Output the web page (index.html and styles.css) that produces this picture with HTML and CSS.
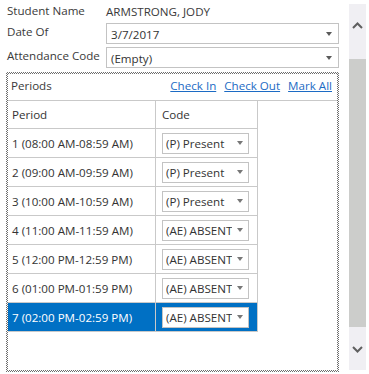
FILE: index.html
```html
<!DOCTYPE html>
<html>
<head>
<meta charset="utf-8">
<link rel="stylesheet" href="styles.css">
</head>
<body>
<div class="page">
  <div class="main">
    <div class="field field-static">
      <div class="label">Student Name</div>
      <div class="value">ARMSTRONG, JODY</div>
    </div>
    <div class="field">
      <div class="label">Date Of</div>
      <div class="select"><span>3/7/2017</span><i class="caret"></i></div>
    </div>
    <div class="field">
      <div class="label">Attendance Code</div>
      <div class="select"><span>(Empty)</span><i class="caret"></i></div>
    </div>
    <div class="focusbox">
      <div class="panel">
        <div class="panel-head">
          <span class="title">Periods</span>
          <nav class="links">
            <a>Check In</a>
            <a>Check Out</a>
            <a>Mark All</a>
          </nav>
        </div>
        <div class="grid">
          <div class="grow ghead"><div class="c1">Period</div><div class="c2">Code</div></div>
          <div class="grow"><div class="c1">1 (08:00 AM-08:59 AM)</div><div class="c2"><div class="cselect"><span>(P) Present</span><i class="caret"></i></div></div></div>
          <div class="grow"><div class="c1">2 (09:00 AM-09:59 AM)</div><div class="c2"><div class="cselect"><span>(P) Present</span><i class="caret"></i></div></div></div>
          <div class="grow"><div class="c1">3 (10:00 AM-10:59 AM)</div><div class="c2"><div class="cselect"><span>(P) Present</span><i class="caret"></i></div></div></div>
          <div class="grow"><div class="c1">4 (11:00 AM-11:59 AM)</div><div class="c2"><div class="cselect"><span>(AE) ABSENT</span><i class="caret"></i></div></div></div>
          <div class="grow"><div class="c1">5 (12:00 PM-12:59 PM)</div><div class="c2"><div class="cselect"><span>(AE) ABSENT</span><i class="caret"></i></div></div></div>
          <div class="grow"><div class="c1">6 (01:00 PM-01:59 PM)</div><div class="c2"><div class="cselect"><span>(AE) ABSENT</span><i class="caret"></i></div></div></div>
          <div class="grow selected"><div class="c1">7 (02:00 PM-02:59 PM)</div><div class="c2"><div class="cselect"><span>(AE) ABSENT</span><i class="caret"></i></div></div></div>
        </div>
      </div>
    </div>
  </div>
  <div class="scrollbar">
    <div class="sb-btn"><svg width="11" height="7" viewBox="0 0 11 7"><path d="M1 6 L5.5 1.5 L10 6" fill="none" stroke="#5f5f5f" stroke-width="2"/></svg></div>
    <div class="sb-track"><div class="sb-thumb"></div></div>
    <div class="sb-btn"><svg width="11" height="7" viewBox="0 0 11 7"><path d="M1 1 L5.5 5.5 L10 1" fill="none" stroke="#5f5f5f" stroke-width="2"/></svg></div>
  </div>
</div>
</body>
</html>
```

FILE: styles.css
```css
html, body {
  margin: 0;
  padding: 0;
  background: #fff;
}
body {
  font-family: "Open Sans", "Noto Sans", sans-serif;
  font-size: 11.6px;
  color: #333;
  width: 369px;
  height: 374px;
  overflow: hidden;
}
.page {
  display: flex;
  height: 374px;
}
.main {
  width: 333px;
  padding-left: 6px;
  padding-top: 2px;
  display: flex;
  flex-direction: column;
}
.field {
  display: grid;
  grid-template-columns: 100px 1fr;
  align-items: start;
  height: 21px;
  margin-bottom: 3px;
}
.field .label {
  padding-left: 1px;
  line-height: 18px;
  white-space: nowrap;
  color: #3a3a3a;
}
.field-static {
  height: 19px;
  margin-bottom: 2px;
}
.value {
  line-height: 19px;
  color: #3a3a3a;
}
.select {
  box-sizing: border-box;
  height: 21px;
  border: 1px solid #c3c3c3;
  background: #fff;
  display: flex;
  align-items: center;
  justify-content: space-between;
  padding: 2px 6px 0 4px;
}
.caret {
  width: 0;
  height: 0;
  border-left: 3.5px solid transparent;
  border-right: 3.5px solid transparent;
  border-top: 4px solid #5a5a5a;
  margin-top: -1px;
}
.focusbox {
  margin-top: 1px;
  height: 300px;
  box-sizing: border-box;
  padding: 2px;
  background: repeating-conic-gradient(#6d6d6d 0 25%, #ffffff 0 50%) 0 0 / 2px 2px;
}
.panel {
  background: #fff;
  height: 100%;
}
.panel-head {
  display: flex;
  justify-content: space-between;
  align-items: center;
  height: 27px;
  box-sizing: border-box;
  padding: 0 5px 3px 3px;
  border-bottom: 1px solid #c9c9c9;
}
.title {
  color: #3a3a3a;
}
.links {
  display: flex;
  gap: 8px;
}
.links a {
  color: #1c6bc4;
  text-decoration: underline;
  cursor: pointer;
}
.grid {
  width: 249px;
  border-right: 1px solid #c9c9c9;
}
.grow {
  display: grid;
  grid-template-columns: 148px 1fr;
  height: 29px;
  box-sizing: border-box;
  border-bottom: 1px solid #c9c9c9;
}
.ghead {
  height: 28px;
}
.c1 {
  border-right: 1px solid #c9c9c9;
  padding-left: 4px;
  display: flex;
  align-items: center;
  white-space: nowrap;
  color: #333;
}
.c2 {
  display: flex;
  align-items: center;
  padding-left: 6px;
}
.cselect {
  box-sizing: border-box;
  width: 87px;
  height: 21px;
  border: 1px solid #c3c3c3;
  background: #fff;
  display: flex;
  align-items: center;
  justify-content: space-between;
  padding: 1px 5px 0 3px;
  overflow: hidden;
}
.cselect span {
  white-space: nowrap;
  overflow: hidden;
  width: 66px;
}
.cselect .caret {
  border-top-color: #777;
}
.selected {
  background: #0070c4;
}
.selected .c1 {
  color: #fff;
}
.scrollbar {
  margin-left: 10px;
  margin-top: 4px;
  width: 17px;
  height: 366px;
  background: #f0eff3;
  display: flex;
  flex-direction: column;
}
.sb-btn {
  height: 42px;
  flex: none;
  display: flex;
  align-items: center;
  justify-content: center;
}
.sb-track {
  flex: 1;
  display: flex;
  flex-direction: column;
  padding-top: 13px;
  padding-bottom: 1px;
}
.sb-thumb {
  flex: 1;
  background: #cccdcb;
}
```
